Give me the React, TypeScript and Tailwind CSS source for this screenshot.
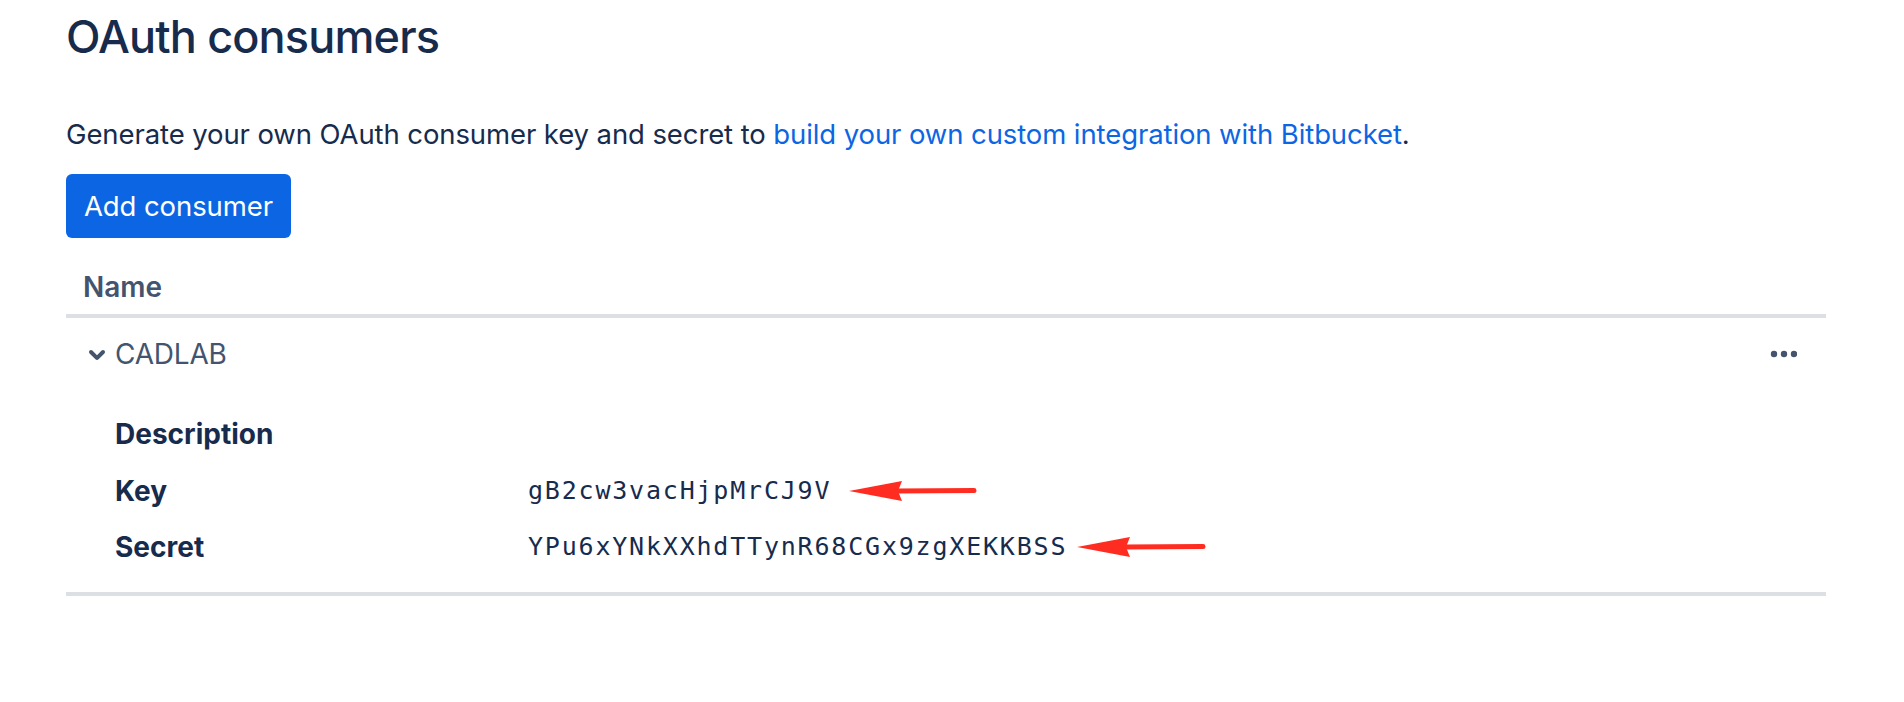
import React from 'react';

// Annotation arrow drawn over the screenshot (red, pointing left)
function RedArrow({ width }: { width: number }) {
  return (
    <svg width={width} height={22} viewBox={`0 0 ${width} 22`} aria-hidden="true">
      <polygon points="0,11 53,1 49,11 53,21" fill="#ff2d21" />
      <line x1={48} y1={11} x2={width - 3} y2={10.5} stroke="#ff2d21" strokeWidth={5} strokeLinecap="round" />
    </svg>
  );
}

function ChevronDown() {
  return (
    <svg width={24} height={24} viewBox="6 6 12 12" aria-hidden="true">
      <path
        fill="#44546f"
        d="M8.292 10.293a1.009 1.009 0 000 1.419l2.939 2.965c.218.215.5.322.779.322s.556-.107.769-.322l2.93-2.955a1.01 1.01 0 000-1.419.987.987 0 00-1.406 0l-2.298 2.317-2.307-2.327a.99.99 0 00-1.406 0z"
      />
    </svg>
  );
}

function MoreDots() {
  return (
    <svg width={30} height={12} viewBox="0 0 30 12" aria-hidden="true">
      <circle cx={7} cy={6} r={3.2} fill="#44546f" />
      <circle cx={17} cy={6} r={3.2} fill="#44546f" />
      <circle cx={27} cy={6} r={3.2} fill="#44546f" />
    </svg>
  );
}

const details = [
  { label: 'Description', value: '', arrow: 0, gap: '' },
  { label: 'Key', value: 'gB2cw3vacHjpMrCJ9V', arrow: 128, gap: 'ml-[18px]' },
  { label: 'Secret', value: 'YPu6xYNkXXhdTTynR68CGx9zgXEKKBSS', arrow: 129, gap: 'ml-[10px]' },
];

export default function App() {
  return (
    <div className="min-h-[702px] w-full bg-white font-['Inter','Noto_Sans',sans-serif] text-[#172b4d]">
      <div className="w-[1826px] pl-[66px] pt-[9px]">
        {/* ── Heading ── */}
        <h1 className="text-[45px] font-medium leading-[56px] tracking-[-0.85px]">OAuth consumers</h1>

        <p className="mt-[49px] text-[27.5px] leading-[40px] tracking-[-0.1px]">
          Generate your own OAuth consumer key and secret to{' '}
          <a href="#" className="text-[#0c66e4]">
            build your own custom integration with Bitbucket
          </a>
          .
        </p>

        <button
          type="button"
          className="mt-[20px] h-[64px] rounded-[6px] bg-[#0c66e4] px-[18px] text-[27.5px] leading-[40px] tracking-[-0.1px] text-white"
        >
          Add consumer
        </button>

        {/* ── Consumers table ── */}
        <div className="mt-[21px]">
          <div className="border-b-4 border-[#dcdfe4] pb-[7px] pl-[17px] pt-[8px] text-[28px] font-semibold leading-[40px] text-[#44546f]">
            Name
          </div>

          <div className="border-b-4 border-[#dcdfe4] pb-[25px] pt-[16px]">
            {/* Row header */}
            <div className="flex items-center justify-between pr-[29px]">
              <div className="flex items-center gap-[6px] pl-[19px]">
                <ChevronDown />
                <span className="text-[28px] leading-[40px] tracking-[-0.2px] text-[#44546f]">CADLAB</span>
              </div>
              <MoreDots />
            </div>

            {/* Expanded details */}
            <div className="mt-[40px] flex flex-col gap-y-[16.5px] pl-[49px]">
              {details.map((d) => (
                <div key={d.label} className="flex items-center">
                  <div className="w-[413px] text-[28px] font-bold leading-[40px]">{d.label}</div>
                  {d.value && (
                    <div className="flex items-center">
                      <span className="font-['DejaVu_Sans_Mono',monospace] text-[25px] leading-[40px] tracking-[1.8px]">
                        {d.value}
                      </span>
                      <span className={d.gap}>
                        <RedArrow width={d.arrow} />
                      </span>
                    </div>
                  )}
                </div>
              ))}
            </div>
          </div>
        </div>
      </div>
    </div>
  );
}
